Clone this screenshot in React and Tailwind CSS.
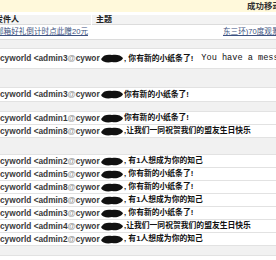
import React from 'react';

const SANS = { fontFamily: '"Liberation Sans", "Noto Sans CJK SC", sans-serif' };

const rows = [
  { kind: 'gap', h: 'h-[9px]' },
  { id: 3, text: ', 你有新的小纸条了!', extra: 'You have a message', h: 'h-[20px]' },
  { kind: 'gap', h: 'h-[19px]' },
  { id: 3, text: ' 你有新的小纸条了!', h: 'h-[14px]' },
  { kind: 'gap', h: 'h-[10px]' },
  { id: 1, text: ' 你有新的小纸条了!' },
  { id: 8, text: ',让我们一同祝贺我们的盟友生日快乐' },
  { kind: 'gap', h: 'h-[17px]' },
  { id: 2, text: ', 有1人想成为你的知己' },
  { id: 5, text: ', 你有新的小纸条了!' },
  { id: 8, text: ', 你有新的小纸条了!' },
  { id: 8, text: ', 有1人想成为你的知己' },
  { id: 3, text: ', 你有新的小纸条了!' },
  { id: 4, text: ',让我们一同祝贺我们的盟友生日快乐' },
  { id: 2, text: ', 有1人想成为你的知己' },
  { kind: 'gap', h: 'h-[10px]' },
];

function Blot() {
  return (
    <svg width="24" height="9" viewBox="0 0 24 9" className="shrink-0">
      <path d="M2 4 C3 1 8 0 12 1 C16 0 21 1 23 4 C22 7 17 9 12 8 C7 9 2 8 1 5 Z" fill="#111" />
    </svg>
  );
}

function MailRow({ id, text, extra, h = 'h-[13px]' }) {
  return (
    <div className={`flex items-center ${h} bg-white border-b border-[#e2e2e2]`}>
      <div className="w-[100px] shrink-0 overflow-hidden whitespace-nowrap text-[8.3px] font-bold text-[#3a3a3a]">
        cyworld &lt;admin{id}<span className="text-[#9a9a9a]">@</span>cyworld.com&gt;
      </div>
      <div className="flex flex-1 items-center overflow-hidden whitespace-nowrap">
        <Blot />
        <span className="text-[7.8px] font-bold text-[#111]">{text}</span>
        {extra && (
          <span
            className="ml-[8px] text-[8.6px] text-[#111]"
            style={{ fontFamily: '"Liberation Mono", "DejaVu Sans Mono", monospace' }}
          >
            {extra}
          </span>
        )}
      </div>
    </div>
  );
}

export default function App() {
  return (
    <div className="w-[276px] h-[260px] overflow-hidden bg-white" style={SANS}>
      {/* notice bar */}
      <div className="flex h-[12px] items-center bg-[#fff9db] pl-[247px] whitespace-nowrap text-[8.5px] font-bold text-[#333]">
        成功移动邮件
      </div>
      <div className="h-[3px] bg-white" />

      {/* header */}
      <div className="flex h-[10px] items-center bg-[#f3f3f3] border-b border-[#dcdcdc] text-[8px] font-bold text-[#222]">
        <div className="w-[97px] shrink-0 -ml-[5px] border-r border-white">发件人</div>
        <div className="pl-[4px]">主题</div>
      </div>

      {/* ad row */}
      <div className="flex h-[15px] items-center bg-white border-b border-[#dcdcdc] whitespace-nowrap text-[7.6px] text-[#3c5180]">
        <span className="-ml-[4px] underline">邮箱好礼倒计时点此赠20元</span>
        <span className="ml-[135px] underline">东三环)70度观景房</span>
      </div>

      {rows.map((r, i) =>
        r.kind === 'gap' ? (
          <div key={i} className={`${r.h} bg-[#f1f1f1] border-b border-[#e2e2e2]`} />
        ) : (
          <MailRow key={i} {...r} />
        )
      )}
    </div>
  );
}
